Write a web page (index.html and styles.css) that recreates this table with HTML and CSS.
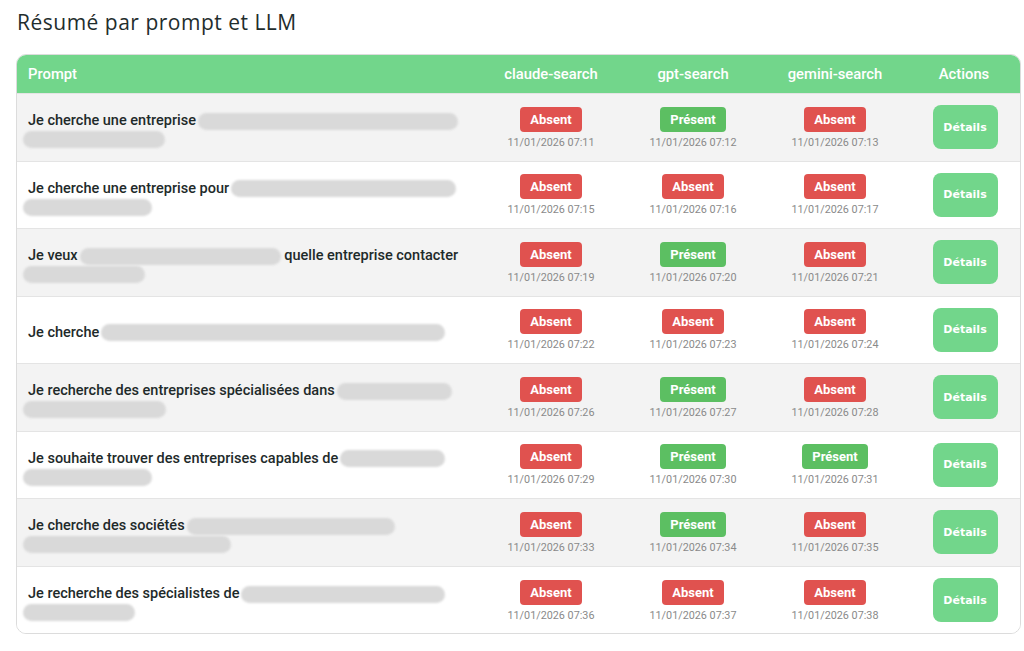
FILE: index.html
```html
<!DOCTYPE html>
<html lang="fr">
<head>
<meta charset="utf-8">
<title>Résumé par prompt et LLM</title>
<link rel="stylesheet" href="styles.css">
</head>
<body>
<h1 class="title">Résumé par prompt et LLM</h1>
<div class="card">
<table class="grid">
<colgroup><col class="c-prompt"><col class="c-llm"><col class="c-llm"><col class="c-llm"><col class="c-act"></colgroup>
<thead>
<tr><th class="th-prompt">Prompt</th><th>claude-search</th><th>gpt-search</th><th>gemini-search</th><th>Actions</th></tr>
</thead>
<tbody>
<tr>
<td class="prompt"><span class="ptext">Je cherche une entreprise</span><span class="blur w260"></span><span class="blur l2 w142"></span></td>
<td><span class="badge no">Absent</span><span class="ts">11/01/2026 07:11</span></td>
<td><span class="badge yes">Présent</span><span class="ts">11/01/2026 07:12</span></td>
<td><span class="badge no">Absent</span><span class="ts">11/01/2026 07:13</span></td>
<td class="act"><button class="btn">Détails</button></td>
</tr>
<tr>
<td class="prompt"><span class="ptext">Je cherche une entreprise pour</span><span class="blur w225"></span><span class="blur l2 w129"></span></td>
<td><span class="badge no">Absent</span><span class="ts">11/01/2026 07:15</span></td>
<td><span class="badge no">Absent</span><span class="ts">11/01/2026 07:16</span></td>
<td><span class="badge no">Absent</span><span class="ts">11/01/2026 07:17</span></td>
<td class="act"><button class="btn">Détails</button></td>
</tr>
<tr>
<td class="prompt"><span class="ptext">Je veux</span><span class="blur w201"></span><span class="ptext"> quelle entreprise contacter</span><span class="blur l2 w122"></span></td>
<td><span class="badge no">Absent</span><span class="ts">11/01/2026 07:19</span></td>
<td><span class="badge yes">Présent</span><span class="ts">11/01/2026 07:20</span></td>
<td><span class="badge no">Absent</span><span class="ts">11/01/2026 07:21</span></td>
<td class="act"><button class="btn">Détails</button></td>
</tr>
<tr>
<td class="prompt"><span class="ptext">Je cherche</span><span class="blur w344"></span></td>
<td><span class="badge no">Absent</span><span class="ts">11/01/2026 07:22</span></td>
<td><span class="badge no">Absent</span><span class="ts">11/01/2026 07:23</span></td>
<td><span class="badge no">Absent</span><span class="ts">11/01/2026 07:24</span></td>
<td class="act"><button class="btn">Détails</button></td>
</tr>
<tr>
<td class="prompt"><span class="ptext">Je recherche des entreprises spécialisées dans</span><span class="blur w115"></span><span class="blur l2 w143"></span></td>
<td><span class="badge no">Absent</span><span class="ts">11/01/2026 07:26</span></td>
<td><span class="badge yes">Présent</span><span class="ts">11/01/2026 07:27</span></td>
<td><span class="badge no">Absent</span><span class="ts">11/01/2026 07:28</span></td>
<td class="act"><button class="btn">Détails</button></td>
</tr>
<tr>
<td class="prompt"><span class="ptext">Je souhaite trouver des entreprises capables de</span><span class="blur w105"></span><span class="blur l2 w129"></span></td>
<td><span class="badge no">Absent</span><span class="ts">11/01/2026 07:29</span></td>
<td><span class="badge yes">Présent</span><span class="ts">11/01/2026 07:30</span></td>
<td><span class="badge yes">Présent</span><span class="ts">11/01/2026 07:31</span></td>
<td class="act"><button class="btn">Détails</button></td>
</tr>
<tr>
<td class="prompt"><span class="ptext">Je cherche des sociétés</span><span class="blur w208"></span><span class="blur l2 w208"></span></td>
<td><span class="badge no">Absent</span><span class="ts">11/01/2026 07:33</span></td>
<td><span class="badge yes">Présent</span><span class="ts">11/01/2026 07:34</span></td>
<td><span class="badge no">Absent</span><span class="ts">11/01/2026 07:35</span></td>
<td class="act"><button class="btn">Détails</button></td>
</tr>
<tr>
<td class="prompt"><span class="ptext">Je recherche des spécialistes de</span><span class="blur w204"></span><span class="blur l2 w112"></span></td>
<td><span class="badge no">Absent</span><span class="ts">11/01/2026 07:36</span></td>
<td><span class="badge no">Absent</span><span class="ts">11/01/2026 07:37</span></td>
<td><span class="badge no">Absent</span><span class="ts">11/01/2026 07:38</span></td>
<td class="act"><button class="btn">Détails</button></td>
</tr>
</tbody>
</table>
</div>
</body>
</html>
```
FILE: styles.css
```css
* { box-sizing: border-box; }
html, body { margin: 0; background: #ffffff; }
body {
  padding: 8px 3px 16px 16px;
  font-family: Roboto, "Liberation Sans", sans-serif;
  color: #1f2a2a;
}
.title {
  margin: 0 0 18px 1px;
  font-family: "Open Sans", "DejaVu Sans", sans-serif;
  font-weight: 400;
  font-size: 21px;
  line-height: 28px;
  letter-spacing: 0.5px;
  color: #1f2d2d;
}
.card {
  width: 1005px;
  border: 1px solid #dcdcdc;
  border-radius: 10px;
  overflow: hidden;
}
.grid {
  width: 100%;
  border-collapse: collapse;
  table-layout: fixed;
}
.c-prompt { width: 463px; }
.c-llm { width: 142px; }
.c-act { width: 116px; }
thead tr { background: #72d68b; }
th {
  height: 38px;
  padding: 0 8px;
  color: #ffffff;
  font-weight: 500;
  font-size: 14.8px;
  text-align: center;
}
th.th-prompt { text-align: left; padding-left: 11px; }
tbody tr { border-top: 1px solid #e4e4e4; }
tbody tr:nth-child(odd) { background: #f3f3f3; height: 68px; }
tbody tr:nth-child(even) { background: #ffffff; height: 67px; }
td {
  padding: 2px 8px 0;
  text-align: center;
  vertical-align: middle;
}
td.act { padding: 0 8px; }
td.prompt {
  text-align: left;
  padding: 18px 10px 12px 11px;
  font-weight: 500;
  font-size: 14.5px;
  line-height: 18px;
  color: #1e2a2a;
}
.ptext { vertical-align: middle; }
.blur {
  display: inline-block;
  vertical-align: middle;
  height: 17px;
  margin-left: 2px;
  border-radius: 9px;
  background: #d9d9d9;
  filter: blur(0.8px);
}
.blur.l2 { display: block; margin: 1px 0 0 -5px; }
.w260 { width: 260px; }
.w225 { width: 225px; }
.w201 { width: 201px; }
.w344 { width: 344px; }
.w115 { width: 115px; }
.w105 { width: 105px; }
.w208 { width: 208px; }
.w204 { width: 204px; }
.w142 { width: 142px; }
.w143 { width: 143px; }
.w129 { width: 129px; }
.w122 { width: 122px; }
.w112 { width: 112px; }
.badge {
  display: inline-block;
  padding: 4px 10px;
  border-radius: 4px;
  color: #ffffff;
  font-weight: 700;
  font-size: 13px;
  line-height: 17px;
}
.badge.no { background: #e0524f; }
.badge.yes { background: #5cbf62; }
.ts {
  display: block;
  margin-top: 4px;
  font-size: 10.8px;
  line-height: 14px;
  color: #8a8a8a;
}
.btn {
  width: 65px;
  height: 44px;
  margin-left: 2px;
  border: none;
  border-radius: 8px;
  background: #72d68b;
  color: #ffffff;
  font-family: "DejaVu Sans", "Open Sans", sans-serif;
  font-weight: 700;
  font-size: 11px;
  padding: 0;
}
```
